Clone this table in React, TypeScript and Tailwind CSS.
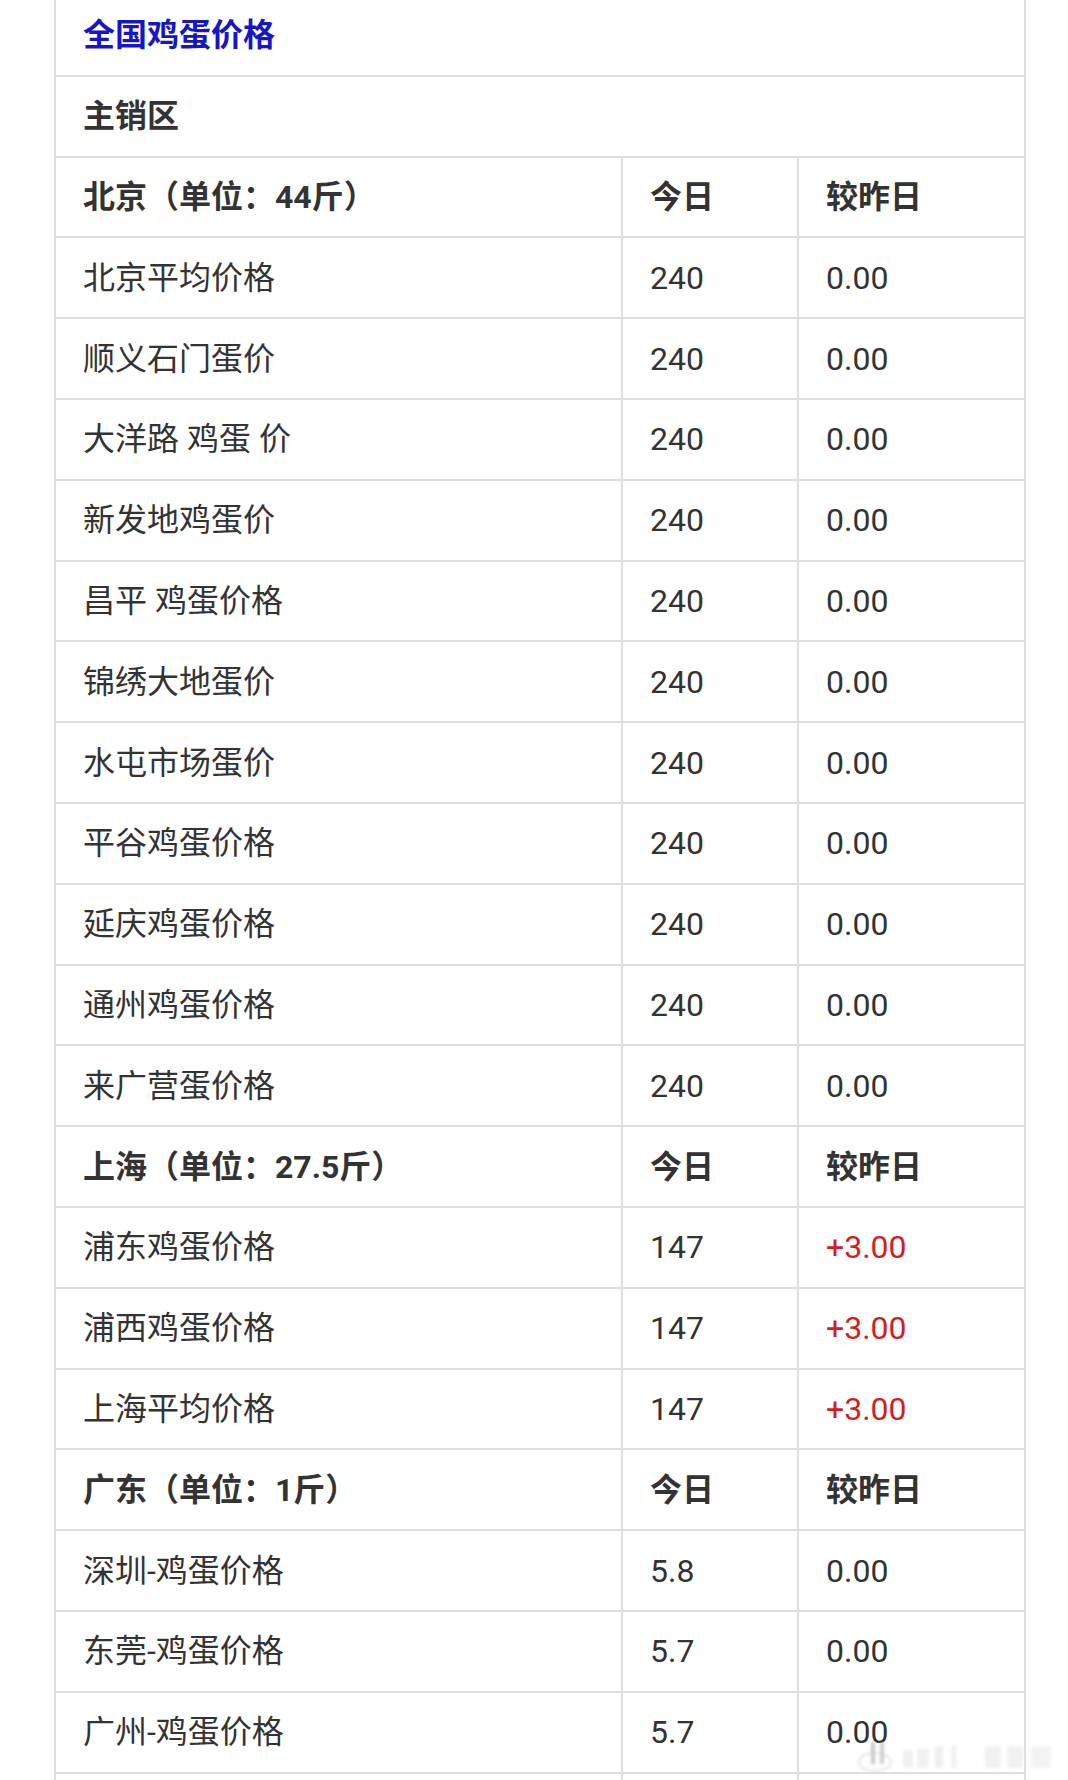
import React from "react";

type Row =
  | { kind: "title"; text: string }
  | { kind: "section"; text: string }
  | { kind: "head"; name: string }
  | { kind: "data"; name: string; today: string; diff: string; up?: boolean }
  | { kind: "blank" };

const rows: Row[] = [
  { kind: "title", text: "全国鸡蛋价格" },
  { kind: "section", text: "主销区" },
  { kind: "head", name: "北京（单位：44斤）" },
  { kind: "data", name: "北京平均价格", today: "240", diff: "0.00" },
  { kind: "data", name: "顺义石门蛋价", today: "240", diff: "0.00" },
  { kind: "data", name: "大洋路 鸡蛋 价", today: "240", diff: "0.00" },
  { kind: "data", name: "新发地鸡蛋价", today: "240", diff: "0.00" },
  { kind: "data", name: "昌平 鸡蛋价格", today: "240", diff: "0.00" },
  { kind: "data", name: "锦绣大地蛋价", today: "240", diff: "0.00" },
  { kind: "data", name: "水屯市场蛋价", today: "240", diff: "0.00" },
  { kind: "data", name: "平谷鸡蛋价格", today: "240", diff: "0.00" },
  { kind: "data", name: "延庆鸡蛋价格", today: "240", diff: "0.00" },
  { kind: "data", name: "通州鸡蛋价格", today: "240", diff: "0.00" },
  { kind: "data", name: "来广营蛋价格", today: "240", diff: "0.00" },
  { kind: "head", name: "上海（单位：27.5斤）" },
  { kind: "data", name: "浦东鸡蛋价格", today: "147", diff: "+3.00", up: true },
  { kind: "data", name: "浦西鸡蛋价格", today: "147", diff: "+3.00", up: true },
  { kind: "data", name: "上海平均价格", today: "147", diff: "+3.00", up: true },
  { kind: "head", name: "广东（单位：1斤）" },
  { kind: "data", name: "深圳-鸡蛋价格", today: "5.8", diff: "0.00" },
  { kind: "data", name: "东莞-鸡蛋价格", today: "5.7", diff: "0.00" },
  { kind: "data", name: "广州-鸡蛋价格", today: "5.7", diff: "0.00" },
  { kind: "blank" },
];

const rowCls = "flex h-[80.8px] border-b-2 border-[#dedede] shrink-0";
const c1 = "flex items-center w-[565px] shrink-0 pl-[27px]";
const c2 = "flex items-center w-[176px] shrink-0 pl-[27px] border-l-2 border-[#dedede]";
const c3 = "flex items-center flex-1 pl-[27px] border-l-2 border-[#dedede]";

function RowView({ r }: { r: Row }) {
  if (r.kind === "title") {
    return (
      <div className={rowCls}>
        <div className="flex items-center pl-[27px] font-bold text-[#1616c4]">{r.text}</div>
      </div>
    );
  }
  if (r.kind === "section") {
    return (
      <div className={rowCls}>
        <div className="flex items-center pl-[27px] font-bold">{r.text}</div>
      </div>
    );
  }
  if (r.kind === "head") {
    return (
      <div className={rowCls + " font-bold"}>
        <div className={c1}>{r.name}</div>
        <div className={c2}>今日</div>
        <div className={c3}>较昨日</div>
      </div>
    );
  }
  if (r.kind === "blank") {
    return (
      <div className={rowCls}>
        <div className={c1}></div>
        <div className={c2}></div>
        <div className={c3}></div>
      </div>
    );
  }
  return (
    <div className={rowCls}>
      <div className={c1}>{r.name}</div>
      <div className={c2}>{r.today}</div>
      <div className={c3 + (r.up ? " text-[#d81c1c]" : "")}>{r.diff}</div>
    </div>
  );
}

export default function App() {
  return (
    <div className="relative w-[1068px] h-[1780px] overflow-hidden bg-white">
      <div
        className="ml-[54px] mt-[-4px] w-[972px] border-x-2 border-[#dedede] text-[32px] leading-none text-[#333333] flex flex-col"
        style={{ fontFamily: 'Roboto, "Noto Sans CJK SC", sans-serif' }}
      >
        {rows.map((r, i) => (
          <RowView key={i} r={r} />
        ))}
      </div>
      {/* faint watermark */}
      <svg
        className="absolute left-[855px] top-[1738px] pointer-events-none"
        width="210"
        height="36"
        viewBox="0 0 210 36"
      >
        <defs>
          <filter id="b" x="-20%" y="-20%" width="140%" height="140%">
            <feGaussianBlur stdDeviation="1.4" />
          </filter>
        </defs>
        <g filter="url(#b)" opacity="0.55">
          <ellipse cx="20" cy="24" rx="16" ry="9" fill="none" stroke="#cfcfcf" strokeWidth="2" />
          <rect x="16" y="4" width="4" height="22" fill="#9a9a9a" />
          <rect x="25" y="4" width="4" height="22" fill="#a5a5a5" />
          <rect x="48" y="12" width="10" height="18" rx="4" fill="#e2e2e2" />
          <rect x="62" y="10" width="12" height="20" rx="3" fill="#e6e6e6" />
          <rect x="80" y="8" width="8" height="22" rx="2" fill="#e2e2e2" />
          <rect x="96" y="8" width="6" height="22" fill="#e8e8e8" />
          <rect x="130" y="8" width="16" height="22" fill="#e6e6e6" />
          <rect x="152" y="8" width="16" height="22" fill="#e6e6e6" />
          <rect x="176" y="8" width="20" height="22" fill="#eaeaea" />
        </g>
      </svg>
    </div>
  );
}
